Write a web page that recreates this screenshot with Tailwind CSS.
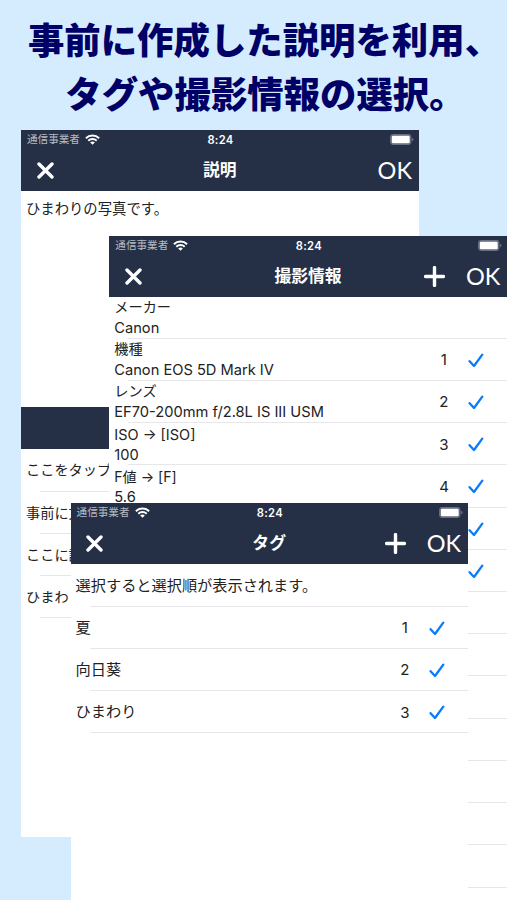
<!DOCTYPE html>
<html lang="ja">
<head>
<meta charset="utf-8">
<title>説明・撮影情報・タグ</title>
<script src="https://cdn.jsdelivr.net/npm/@tailwindcss/browser@4"></script>
</head>
<body class="bg-[#d5ecff]">
<svg class="hidden">
  <symbol id="wifi" viewBox="0 0 15 11"><g fill="none" stroke="#fff" stroke-width="1.9"><path d="M.9 4.2a9.4 9.4 0 0 1 13.2 0"/><path d="M3.3 6.7a6 6 0 0 1 8.4 0"/></g><path d="M7.5 10.8 5.2 8.5a3.3 3.3 0 0 1 4.6 0z" fill="#fff"/></symbol>
  <symbol id="battery" viewBox="0 0 24 11"><rect x=".6" y=".6" width="20.3" height="9.8" rx="2.8" fill="#5d6577" stroke="#687083" stroke-width="1.1"/><rect x="1.8" y="1.8" width="17.9" height="7.4" rx="1.3" fill="#fff"/><path d="M22.2 3.8q1.3.4 1.3 1.7t-1.3 1.7z" fill="#727a8a"/></symbol>
  <symbol id="close" viewBox="0 0 17 17"><path d="M2 2 15 15M15 2 2 15" stroke="#fff" stroke-width="3.4" stroke-linecap="round"/></symbol>
  <symbol id="plus" viewBox="0 0 21 21"><path d="M10.5 1.6v17.8M1.6 10.5h17.8" stroke="#fff" stroke-width="3.4" stroke-linecap="round"/></symbol>
  <symbol id="check" viewBox="0 0 16 15"><path d="M1.6 8.2 6 13 14.3 1.6" fill="none" stroke="#0a7aff" stroke-width="2.3" stroke-linecap="round" stroke-linejoin="round"/></symbol>
</svg>
<main class="relative h-[900px] w-[507px] overflow-hidden bg-[#d5ecff] font-['Inter','Noto_Sans_CJK_JP',sans-serif] text-[14.2px] text-[#222]">
  <h1 class="flex flex-col items-center pt-[11px] font-['Noto_Sans_CJK_JP',sans-serif] text-[36.4px] leading-[54px] font-black whitespace-nowrap text-[#000066]">
    <span class="pl-[22px]">事前に作成した説明を利用、</span>
    <span class="pl-[24px]">タグや撮影情報の選択。</span>
  </h1>

  <!-- 説明 -->
  <section class="absolute top-[129.5px] left-[21px] h-[707.5px] w-[398px] bg-white">
    <header class="h-[61px] bg-[#253046] text-white">
      <div class="grid h-[20px] grid-cols-3 items-center pr-[5px] pl-[6px]">
        <div class="flex items-center gap-[5px] text-[10.6px] text-[#b5bac4]"><span>通信事業者</span><svg class="h-[11px] w-[15px]"><use href="#wifi"/></svg></div>
        <span class="pt-px text-center text-[11.2px] font-semibold tracking-[.3px]">8:24</span>
        <svg class="h-[11px] w-[24px] justify-self-end"><use href="#battery"/></svg>
      </div>
      <div class="grid h-[41px] grid-cols-3 items-center pr-[7px] pl-[15.5px]">
        <svg class="h-[17px] w-[17px]"><use href="#close"/></svg>
        <span class="pt-[2px] pr-[9px] text-center text-[16.8px] font-bold">説明</span>
        <span class="justify-self-end pt-[2px] font-['Lato'] text-[23.5px]">OK</span>
      </div>
    </header>
    <div class="h-[216px] pt-[8px] pl-[5px] text-[14.35px] leading-[20px]">ひまわりの写真です。</div>
    <div class="h-[42px] bg-[#253046]"></div>
    <ul class="pt-[.8px] whitespace-nowrap">
      <li class="flex h-[42.3px] flex-col"><span class="flex flex-1 items-center pl-[5px]">ここをタップ</span><i class="ml-[19px] h-px bg-[#e7e7e9]"></i></li>
      <li class="flex h-[42.3px] flex-col"><span class="flex flex-1 items-center pl-[5px]">事前に文</span><i class="ml-[19px] h-px bg-[#e7e7e9]"></i></li>
      <li class="flex h-[42.3px] flex-col"><span class="flex flex-1 items-center pl-[5px]">ここに説</span><i class="ml-[19px] h-px bg-[#e7e7e9]"></i></li>
      <li class="flex h-[42.3px] flex-col"><span class="flex flex-1 items-center pl-[5px]">ひまわ</span><i class="ml-[19px] h-px bg-[#e7e7e9]"></i></li>
    </ul>
  </section>

  <!-- 撮影情報 -->
  <section class="absolute top-[235.5px] left-[109.3px] h-[700px] w-[398px] bg-white">
    <header class="h-[61px] bg-[#253046] text-white">
      <div class="grid h-[20px] grid-cols-3 items-center pr-[5px] pl-[6px]">
        <div class="flex items-center gap-[5px] text-[10.6px] text-[#b5bac4]"><span>通信事業者</span><svg class="h-[11px] w-[15px]"><use href="#wifi"/></svg></div>
        <span class="pt-px text-center text-[11.2px] font-semibold tracking-[.3px]">8:24</span>
        <svg class="h-[11px] w-[24px] justify-self-end"><use href="#battery"/></svg>
      </div>
      <div class="grid h-[41px] grid-cols-3 items-center pr-[7px] pl-[15.5px]">
        <svg class="h-[17px] w-[17px]"><use href="#close"/></svg>
        <span class="pt-[2px] pr-[9px] text-center text-[16.8px] font-bold">撮影情報</span>
        <div class="flex items-center gap-[21px] justify-self-end"><svg class="h-[21px] w-[21px]"><use href="#plus"/></svg><span class="pt-[2px] font-['Lato'] text-[23.5px]">OK</span></div>
      </div>
    </header>
    <ul class="whitespace-nowrap [&_i]:shrink-0 [&>li>div]:min-h-0">
      <li class="flex h-[42.23px] flex-col"><div class="flex flex-1 items-center pl-[5px]"><div class="leading-[21px]"><p>メーカー</p><p class="pt-px text-[14.65px]">Canon</p></div></div><i class="ml-[19px] h-px bg-[#e7e7e9]"></i></li>
      <li class="flex h-[42.23px] flex-col"><div class="flex flex-1 items-center pr-[23px] pl-[5px]"><div class="flex-1 leading-[21px]"><p>機種</p><p class="pt-px text-[14.65px]">Canon EOS 5D Mark IV</p></div><span class="mr-[20px] w-[9px] pt-[2px] text-center text-[15px]">1</span><svg class="mt-[2px] h-[15px] w-[16px]"><use href="#check"/></svg></div><i class="ml-[19px] h-px bg-[#e7e7e9]"></i></li>
      <li class="flex h-[42.23px] flex-col"><div class="flex flex-1 items-center pr-[23px] pl-[5px]"><div class="flex-1 leading-[21px]"><p>レンズ</p><p class="pt-px text-[14.65px]">EF70-200mm f/2.8L IS III USM</p></div><span class="mr-[20px] w-[9px] pt-[2px] text-center text-[15px]">2</span><svg class="mt-[2px] h-[15px] w-[16px]"><use href="#check"/></svg></div><i class="ml-[19px] h-px bg-[#e7e7e9]"></i></li>
      <li class="flex h-[42.23px] flex-col"><div class="flex flex-1 items-center pr-[23px] pl-[5px]"><div class="flex-1 pt-[2px] leading-[21px]"><p class="text-[14.5px]">ISO → [ISO]</p><p class="text-[14.65px]">100</p></div><span class="mr-[20px] w-[9px] pt-[2px] text-center text-[15px]">3</span><svg class="mt-[2px] h-[15px] w-[16px]"><use href="#check"/></svg></div><i class="ml-[19px] h-px bg-[#e7e7e9]"></i></li>
      <li class="flex h-[42.23px] flex-col"><div class="flex flex-1 items-center pr-[23px] pl-[5px]"><div class="flex-1 pt-[2px] leading-[21px]"><p class="text-[14.1px]">F値 → [F]</p><p class="text-[14.65px]">5.6</p></div><span class="mr-[20px] w-[9px] pt-[2px] text-center text-[15px]">4</span><svg class="mt-[2px] h-[15px] w-[16px]"><use href="#check"/></svg></div><i class="ml-[19px] h-px bg-[#e7e7e9]"></i></li>
      <li class="flex h-[42.23px] flex-col"><div class="flex flex-1 items-center justify-end pr-[23px]"><svg class="mt-[2px] h-[15px] w-[16px]"><use href="#check"/></svg></div><i class="ml-[19px] h-px bg-[#e7e7e9]"></i></li>
      <li class="flex h-[42.23px] flex-col"><div class="flex flex-1 items-center justify-end pr-[23px]"><svg class="mt-[2px] h-[15px] w-[16px]"><use href="#check"/></svg></div><i class="ml-[19px] h-px bg-[#e7e7e9]"></i></li>
      <li class="flex h-[42.23px] flex-col justify-end"><i class="ml-[19px] h-px bg-[#e7e7e9]"></i></li>
      <li class="flex h-[42.23px] flex-col justify-end"><i class="ml-[19px] h-px bg-[#e7e7e9]"></i></li>
      <li class="flex h-[42.23px] flex-col justify-end"><i class="ml-[19px] h-px bg-[#e7e7e9]"></i></li>
      <li class="flex h-[42.23px] flex-col justify-end"><i class="ml-[19px] h-px bg-[#e7e7e9]"></i></li>
      <li class="flex h-[42.23px] flex-col justify-end"><i class="ml-[19px] h-px bg-[#e7e7e9]"></i></li>
      <li class="flex h-[42.23px] flex-col justify-end"><i class="ml-[19px] h-px bg-[#e7e7e9]"></i></li>
      <li class="flex h-[42.23px] flex-col justify-end"><i class="ml-[19px] h-px bg-[#e7e7e9]"></i></li>
    </ul>
  </section>

  <!-- タグ -->
  <section class="absolute top-[502.5px] left-[70.6px] h-[400px] w-[397.6px] bg-white">
    <header class="h-[61px] bg-[#253046] text-white">
      <div class="grid h-[20px] grid-cols-3 items-center pr-[5px] pl-[6px]">
        <div class="flex items-center gap-[5px] text-[10.6px] text-[#b5bac4]"><span>通信事業者</span><svg class="h-[11px] w-[15px]"><use href="#wifi"/></svg></div>
        <span class="pt-px text-center text-[11.2px] font-semibold tracking-[.3px]">8:24</span>
        <svg class="h-[11px] w-[24px] justify-self-end"><use href="#battery"/></svg>
      </div>
      <div class="grid h-[41px] grid-cols-3 items-center pr-[7px] pl-[15.5px]">
        <svg class="h-[17px] w-[17px]"><use href="#close"/></svg>
        <span class="pt-[2px] pr-[9px] text-center text-[16.8px] font-bold">タグ</span>
        <div class="flex items-center gap-[21px] justify-self-end"><svg class="h-[21px] w-[21px]"><use href="#plus"/></svg><span class="pt-[2px] font-['Lato'] text-[23.5px]">OK</span></div>
      </div>
    </header>
    <ul class="pt-[.8px] text-[15.2px] whitespace-nowrap">
      <li class="flex h-[42.3px] flex-col"><div class="flex flex-1 items-center pt-[2px] pl-[5px]">選択すると選択順が表示されます。</div><i class="ml-[19px] h-px bg-[#e7e7e9]"></i></li>
      <li class="flex h-[42.3px] flex-col"><div class="flex flex-1 items-center pt-[2px] pr-[23px] pl-[5px]"><span class="flex-1">夏</span><span class="mr-[20px] w-[9px] text-center text-[15px]">1</span><svg class="h-[15px] w-[16px]"><use href="#check"/></svg></div><i class="ml-[19px] h-px bg-[#e7e7e9]"></i></li>
      <li class="flex h-[42.3px] flex-col"><div class="flex flex-1 items-center pt-[2px] pr-[23px] pl-[5px]"><span class="flex-1">向日葵</span><span class="mr-[20px] w-[9px] text-center text-[15px]">2</span><svg class="h-[15px] w-[16px]"><use href="#check"/></svg></div><i class="ml-[19px] h-px bg-[#e7e7e9]"></i></li>
      <li class="flex h-[42.3px] flex-col"><div class="flex flex-1 items-center pt-[2px] pr-[23px] pl-[5px]"><span class="flex-1">ひまわり</span><span class="mr-[20px] w-[9px] text-center text-[15px]">3</span><svg class="h-[15px] w-[16px]"><use href="#check"/></svg></div><i class="ml-[19px] h-px bg-[#e7e7e9]"></i></li>
    </ul>
  </section>
</main>
</body>
</html>
